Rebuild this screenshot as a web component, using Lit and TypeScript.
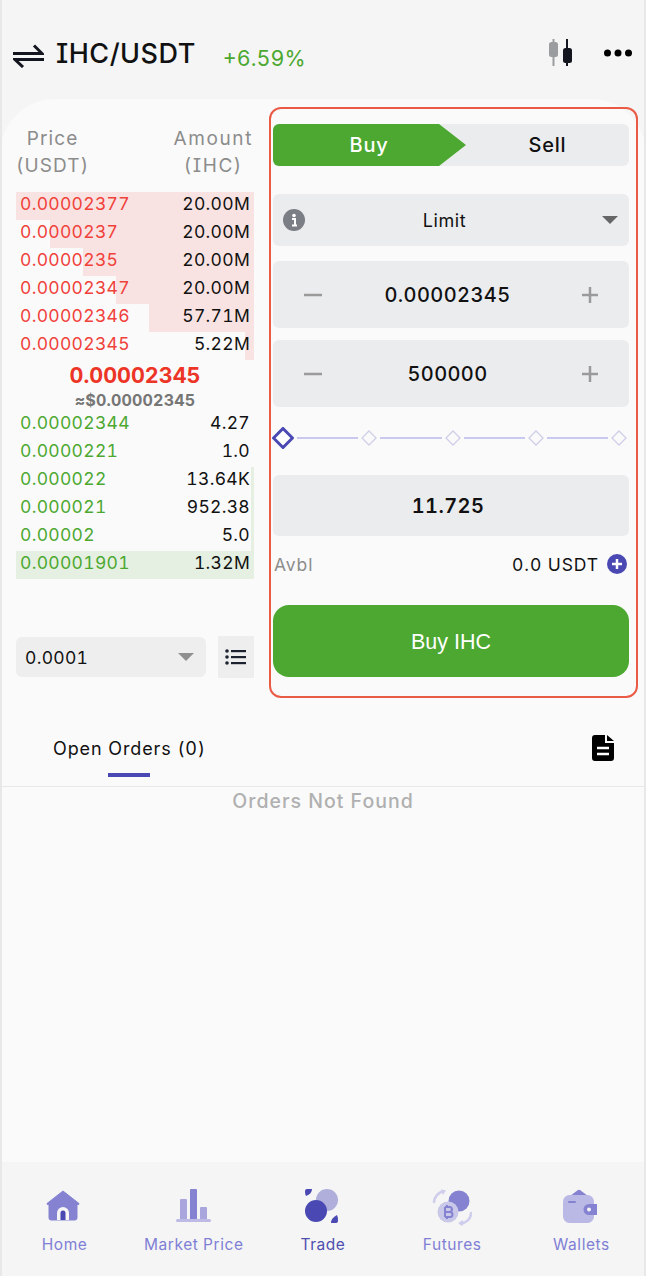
import { LitElement, html, css, svg } from "lit";
import { customElement } from "lit/decorators.js";

type Level = { price: string; qty: string; bar: number };

const ASKS: Level[] = [
  { price: "0.00002377", qty: "20.00M", bar: 238 },
  { price: "0.0000237", qty: "20.00M", bar: 204 },
  { price: "0.0000235", qty: "20.00M", bar: 171 },
  { price: "0.00002347", qty: "20.00M", bar: 138 },
  { price: "0.00002346", qty: "57.71M", bar: 105 },
  { price: "0.00002345", qty: "5.22M", bar: 9 },
];

const BIDS: Level[] = [
  { price: "0.00002344", qty: "4.27", bar: 0 },
  { price: "0.0000221", qty: "1.0", bar: 0 },
  { price: "0.000022", qty: "13.64K", bar: 3 },
  { price: "0.000021", qty: "952.38", bar: 3 },
  { price: "0.00002", qty: "5.0", bar: 3 },
  { price: "0.00001901", qty: "1.32M", bar: 238 },
];

const NAV = [
  {
    label: "Home",
    icon: svg`<path d="M17 2 33 14.500Q33.500 16 31 15.500V29Q31 31 29 31H5Q3 31 3 29V15.500Q.5 16 1 14.500Z" fill="#8583d1" stroke="#8583d1" stroke-linejoin="round"/>
      <path d="M11 31V24a6 6 0 0 1 12 0v7Z" fill="#f5f5f5"/><path d="M14.500 31v-7a2.500 2.500 0 0 1 5 0v7Z" fill="#4a49b3"/>`,
  },
  {
    label: "Market Price",
    icon: svg`<rect x="5" y="10" width="7" height="21" rx="1" fill="#a9a6dd"/><rect x="15" y="0" width="7" height="31" rx="1" fill="#8583d1"/>
      <rect x="25" y="18" width="7" height="13" rx="1" fill="#a9a6dd"/><rect x="1" y="30" width="35" height="3" rx="1.500" fill="#bdbbe5"/>`,
  },
  {
    label: "Trade",
    active: true,
    icon: svg`<circle cx="23" cy="11" r="11" fill="#b0aedb"/><circle cx="12" cy="22" r="11" fill="#4a49b3"/>
      <path d="M1 2Q1 0 3 0H8Q8 5 2 7Q1 6 1 2Z" fill="#4a49b3"/><path d="M34 32Q34 34 32 34H27Q27 29 33 26Q34 28 34 32Z" fill="#4a49b3"/>`,
  },
  {
    label: "Futures",
    icon: svg`<circle cx="26" cy="12" r="10.500" fill="#8583d1"/><circle cx="15" cy="23" r="10.500" fill="#c9c8e8"/>
      <path d="M12 18v10M12 18h4.500a2.500 2.500 0 0 1 0 5H12M12 23h5a2.500 2.500 0 0 1 0 5H12M14 16v2M14 28v2" fill="none" stroke="#8583d1" stroke-width="2"/>
      <path d="M1 13Q2 5 10 2" fill="none" stroke="#cfcdec" stroke-width="2.500" stroke-linecap="round"/><path d="M8 .5 13 1.500 10 6Z" fill="#cfcdec"/>
      <path d="M38 24Q38 32 28 35" fill="none" stroke="#cfcdec" stroke-width="2.500" stroke-linecap="round"/><path d="M30 37 25 34 30 31Z" fill="#cfcdec"/>`,
  },
  {
    label: "Wallets",
    icon: svg`<path d="M8 7 16 1Q17 .5 18 1L26 7Z" fill="#8583d1"/><rect x="1" y="6" width="31" height="28" rx="6.500" fill="#bab8e4"/>
      <path d="M27 15H35V26H27a5.500 5.500 0 0 1 0-11Z" fill="#8583d1"/><circle cx="27" cy="20.500" r="2" fill="#f5f5f5"/>
      <rect x="6" y="12" width="8" height="2" rx="1" fill="#8583d1"/>`,
  },
];

@customElement("app-root")
export class AppRoot extends LitElement {
  static styles = css`
    :host {
      display: block;
      font-family: Inter, "Noto Sans", sans-serif;
      font-feature-settings: "cv08", "tnum";
      color: #111;
    }
    .page {
      position: relative;
      height: 1276px;
      display: flex;
      flex-direction: column;
      background: #f5f5f5;
      overflow: hidden;
    }
    .page::before,
    .page::after {
      content: "";
      position: absolute;
      top: 0;
      bottom: 0;
      width: 2px;
      background: #e8e8e8;
    }
    .page::before { left: 0; }
    .page::after { right: 0; }

    header {
      height: 99px;
      box-sizing: border-box;
      padding: 36px 14px 0 13px;
      display: flex;
      align-items: flex-start;
    }
    .swap { margin-top: 8px; }
    .pair {
      margin-left: 12px;
      font-size: 27px;
      font-weight: 500;
      line-height: 36px;
      letter-spacing: 0.5px;
    }
    .change {
      margin: 4px 0 0 27px;
      font-size: 21.500px;
      line-height: 36px;
      color: #4ca830;
    }
    .actions {
      margin-left: auto;
      display: flex;
      align-items: center;
      gap: 31px;
      height: 34px;
    }

    main {
      flex: 1;
      display: flex;
      flex-direction: column;
      background: #fafafa;
      border-radius: 55px 55px 0 0;
    }
    .market {
      display: flex;
      padding: 8px 8px 0 16px;
      gap: 15px;
    }

    .book { width: 238px; display: flex; flex-direction: column; }
    .book-head {
      display: flex;
      justify-content: space-between;
      margin-top: 18px;
      margin-bottom: 13px;
      font-size: 19px;
      line-height: 27px;
      letter-spacing: 1.1px;
      color: #8c8c8c;
      text-align: center;
    }
    .book-head .amount { margin-right: 1px; letter-spacing: 1.6px; }
    .row {
      position: relative;
      box-sizing: border-box;
      height: 28px;
      display: flex;
      justify-content: space-between;
      align-items: center;
      padding: 0 4px 5px 4px;
      font-size: 17.500px;
      letter-spacing: 0.3px;
    }
    .row .bar { position: absolute; top: 0; bottom: 0; right: 0; }
    .row span { position: relative; }
    .ask .px { color: #f0413a; }
    .ask .bar { background: #f9e3e2; }
    .bid .px { color: #4ca830; }
    .bid .bar { background: #e5f0e2; }
    .last {
      height: 51px;
      display: flex;
      flex-direction: column;
      align-items: center;
      color: #ec3526;
      font-size: 21.500px;
      font-weight: 700;
      line-height: 30px;
    }
    .last small {
      font-size: 16px;
      font-weight: 700;
      line-height: 21px;
      letter-spacing: 0.2px;
      color: #767676;
    }
    .depth { display: flex; gap: 12px; align-items: center; margin-top: 57px; }
    .step-select {
      flex: 1;
      height: 40px;
      display: flex;
      align-items: center;
      justify-content: space-between;
      padding: 0 12px 0 9px;
      background: #eeeeee;
      border-radius: 6px;
      font-size: 17.500px;
      letter-spacing: 0.3px;
    }
    .caret { width: 0; height: 0; border-style: solid; border-color: transparent; border-width: 8px 8px 0; }
    .step-select .caret { border-top-color: #8f8f8f; }
    .view {
      width: 36px;
      height: 42px;
      display: flex;
      align-items: center;
      justify-content: center;
      background: #eeeeee;
    }

    .order {
      box-sizing: border-box;
      width: 369px;
      height: 591px;
      padding: 15px 7px 0 2px;
      border: 2px solid #ea5b45;
      border-radius: 12px;
      display: flex;
      flex-direction: column;
    }
    .side {
      height: 42px;
      display: flex;
      background: #ebecee;
      border-radius: 6px;
      font-size: 20px;
      font-weight: 500;
      line-height: 42px;
      letter-spacing: 0.8px;
      text-align: center;
    }
    .side .buy {
      width: 140px;
      padding-left: 26px;
      background: #4ca830;
      color: #fff;
      border-radius: 6px 0 0 6px;
    }
    .side .tip {
      width: 27px;
      background: #4ca830;
      clip-path: polygon(0 0, 100% 50%, 0 100%);
    }
    .side .sell { flex: 1; }
    .field {
      display: flex;
      align-items: center;
      background: #ebecee;
      border-radius: 6px;
      font-size: 20px;
      font-weight: 500;
    }
    .field .val { flex: 1; text-align: center; letter-spacing: 0.4px; }
    .type { height: 52px; margin-top: 28px; padding: 0 11px 0 10px; font-size: 18px; font-weight: 400; }
    .type .val { padding-right: 18px; letter-spacing: 0.6px; }
    .type .caret { border-top-color: #666; }
    .stepper { height: 67px; padding: 0 31px; }
    .stepper .val { padding-right: 9px; }
    .stepper.price { margin-top: 15px; }
    .stepper.qty { margin-top: 12px; }
    .slider {
      height: 24px;
      margin: 19px 2px 25px -1px;
      display: flex;
      align-items: center;
      gap: 3px;
    }
    .slider i { flex: 1; height: 2px; background: #c9c8ee; }
    .total { height: 61px; padding-right: 6px; font-weight: 600; }
    .avbl {
      height: 24px;
      margin: 16px 2px 0 1px;
      display: flex;
      align-items: center;
      font-size: 17.500px;
      letter-spacing: 0.9px;
      gap: 8px;
    }
    .avbl .label { flex: 1; color: #8c8c8c; }
    .submit {
      height: 72px;
      margin-top: 29px;
      background: #4ca830;
      border-radius: 16px;
      color: #fff;
      font-family: "Liberation Sans", Arial, sans-serif;
      font-size: 21.500px;
      line-height: 74px;
      text-align: center;
    }

    .tabs {
      height: 73px;
      margin-top: 16px;
      box-sizing: border-box;
      display: flex;
      align-items: flex-start;
      justify-content: space-between;
      padding: 0 32px 0 53px;
      border-bottom: 1px solid #e8e8e8;
    }
    .tab {
      position: relative;
      height: 72px;
      font-size: 18px;
      line-height: 70px;
      letter-spacing: 0.9px;
    }
    .tab::after {
      content: "";
      position: absolute;
      left: 55px;
      bottom: 9px;
      width: 42px;
      height: 4px;
      background: #4a49b3;
    }
    .doc { margin-top: 21px; }
    .empty {
      text-align: center;
      font-size: 19.500px;
      font-weight: 500;
      line-height: 28px;
      letter-spacing: 1px;
      color: #b0b0b0;
    }

    nav {
      height: 114px;
      box-sizing: border-box;
      display: grid;
      grid-template-columns: repeat(5, 1fr);
      padding-top: 27px;
      background: #f5f5f5;
    }
    .item {
      display: flex;
      flex-direction: column;
      align-items: center;
      font-size: 15.500px;
      color: #7f7fd6;
    }
    .item svg { height: 38px; }
    .item span { margin-top: 6px; line-height: 24px; letter-spacing: 0.55px; }
    .item.active { color: #4f4fb0; }
  `;

  private renderRow(side: string, l: Level) {
    return html`<div class="row ${side}">
      <div class="bar" style="width:${l.bar}px"></div>
      <span class="px">${l.price}</span><span>${l.qty}</span>
    </div>`;
  }

  private renderStepper(cls: string, value: string) {
    return html`<div class="field stepper ${cls}">
      <svg width="18" height="16" viewBox="0 0 18 16"><path d="M0 8H18" stroke="#9a9a9a" stroke-width="2.500"/></svg>
      <span class="val">${value}</span>
      <svg width="16" height="16" viewBox="0 0 16 16"><path d="M0 8H16M8 0V16" stroke="#9a9a9a" stroke-width="2.500"/></svg>
    </div>`;
  }

  private diamond() {
    return html`<svg width="16" height="16" viewBox="0 0 16 16"><path d="M8 1 15 8 8 15 1 8Z" fill="#fafafa" stroke="#cfcfe8" stroke-width="1.300"/></svg>`;
  }

  render() {
    return html`<div class="page">
      <header>
        <svg class="swap" width="31" height="24" viewBox="0 0 31 24">
          <path d="M0 9.500H29L21 1.500M31 15.500H2L10 23" fill="none" stroke="#14161f" stroke-width="3"/>
        </svg>
        <div class="pair">IHC/USDT</div>
        <div class="change">+6.59%</div>
        <div class="actions">
          <svg width="24" height="28" viewBox="0 0 24 28">
            <path d="M4.500 0V27" stroke="#9b9ca0" stroke-width="2"/><rect x="0" y="3" width="9" height="15" rx="2.500" fill="#9b9ca0"/>
            <path d="M18 0V27" stroke="#14161f" stroke-width="2"/><rect x="14" y="9" width="9" height="15" rx="2.500" fill="#14161f"/>
          </svg>
          <svg width="28" height="8" viewBox="0 0 28 8"><circle cx="3.500" cy="4" r="3.500"/><circle cx="14" cy="4" r="3.500"/><circle cx="24.500" cy="4" r="3.500"/></svg>
        </div>
      </header>
      <main>
        <div class="market">
          <section class="book">
            <div class="book-head">
              <div>Price<br />(USDT)</div>
              <div class="amount">Amount<br />(IHC)</div>
            </div>
            ${ASKS.map((l) => this.renderRow("ask", l))}
            <div class="last">0.00002345<small>≈$0.00002345</small></div>
            ${BIDS.map((l) => this.renderRow("bid", l))}
            <div class="depth">
              <div class="step-select">0.0001<span class="caret"></span></div>
              <div class="view">
                <svg width="22" height="16" viewBox="0 0 22 16"><g fill="#1c2230"><circle cx="2" cy="2" r="1.800"/><circle cx="2" cy="8" r="1.800"/><circle cx="2" cy="14" r="1.800"/><rect x="6" y="1" width="15" height="2.200"/><rect x="6" y="7" width="15" height="2.200"/><rect x="6" y="13" width="15" height="2.200"/></g></svg>
              </div>
            </div>
          </section>
          <section class="order">
            <div class="side">
              <div class="buy">Buy</div>
              <div class="tip"></div>
              <div class="sell">Sell</div>
            </div>
            <div class="field type">
              <svg width="22" height="22" viewBox="0 0 22 22"><circle cx="11" cy="11" r="11" fill="#7b7e85"/><circle cx="11" cy="6.500" r="1.800" fill="#fff"/><path d="M9 10H12V16M9 16.500H14" fill="none" stroke="#fff" stroke-width="2"/></svg>
              <span class="val">Limit</span>
              <span class="caret"></span>
            </div>
            ${this.renderStepper("price", "0.00002345")}
            ${this.renderStepper("qty", "500000")}
            <div class="slider">
              <svg width="22" height="22" viewBox="0 0 22 22"><path d="M11 1.500 20.500 11 11 20.500 1.500 11Z" fill="#fff" stroke="#4a49b3" stroke-width="3"/></svg>
              <i></i>${this.diamond()}<i></i>${this.diamond()}<i></i>${this.diamond()}<i></i>${this.diamond()}
            </div>
            <div class="field total"><span class="val">11.725</span></div>
            <div class="avbl">
              <span class="label">Avbl</span>
              <span>0.0 USDT</span>
              <svg width="20" height="20" viewBox="0 0 20 20"><circle cx="10" cy="10" r="10" fill="#4a49b3"/><path d="M5 10H15M10 5V15" stroke="#fff" stroke-width="2.500"/></svg>
            </div>
            <div class="submit">Buy IHC</div>
          </section>
        </div>
        <div class="tabs">
          <div class="tab">Open Orders (0)</div>
          <svg class="doc" width="22" height="26" viewBox="0 0 22 26">
            <path d="M3 0H13V8H22V23Q22 26 19 26H3Q0 26 0 23V3Q0 0 3 0Z" fill="#000"/><path d="M15 0 22 6H15Z" fill="#000"/>
            <path d="M5 13H17M5 19H17" stroke="#fff" stroke-width="2.500"/>
          </svg>
        </div>
        <div class="empty">Orders Not Found</div>
      </main>
      <nav>
        ${NAV.map(
          (n) => html`<div class="item ${n.active ? "active" : ""}">
            <svg width="40" height="38" viewBox="0 0 38 38">${n.icon}</svg>
            <span>${n.label}</span>
          </div>`
        )}
      </nav>
    </div>`;
  }
}
